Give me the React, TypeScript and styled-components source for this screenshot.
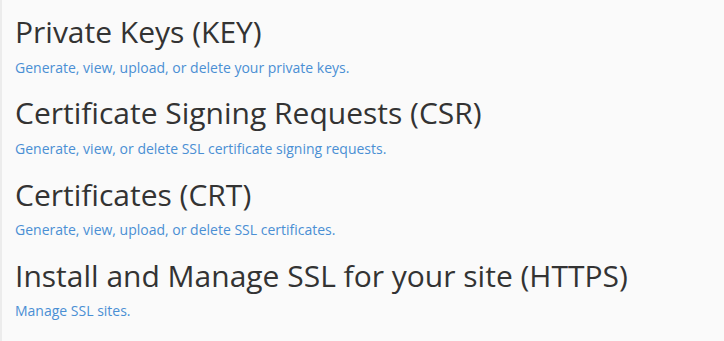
import React from "react";
import styled, { createGlobalStyle } from "styled-components";

const GlobalStyle = createGlobalStyle`
  html, body {
    margin: 0;
    padding: 0;
    background: #fafafa;
  }
`;

const Page = styled.main`
  font-family: "Open Sans", "Liberation Sans", Arial, sans-serif;
  min-height: 341px;
  box-sizing: border-box;
  border-left: 2px solid #ececec;
  padding: 12px 13px 0;
  background: #fafafa;
`;

const Section = styled.section`
  display: flex;
  flex-direction: column;
  align-items: flex-start;
  height: 81.3px;
`;

const Heading = styled.h2`
  margin: 0;
  font-size: 30px;
  font-weight: 400;
  line-height: 40px;
  color: #333333;
`;

const Description = styled.a`
  margin-top: 5.6px;
  font-size: 14px;
  line-height: 20px;
  color: #4a8fd4;
  text-decoration: none;
  cursor: pointer;
`;

const tools = [
  {
    title: "Private Keys (KEY)",
    text: "Generate, view, upload, or delete your private keys.",
  },
  {
    title: "Certificate Signing Requests (CSR)",
    text: "Generate, view, or delete SSL certificate signing requests.",
  },
  {
    title: "Certificates (CRT)",
    text: "Generate, view, upload, or delete SSL certificates.",
  },
  {
    title: "Install and Manage SSL for your site (HTTPS)",
    text: "Manage SSL sites.",
  },
];

export default function App() {
  return (
    <>
      <GlobalStyle />
      <Page>
        {tools.map((tool) => (
          <Section key={tool.title}>
            <Heading>{tool.title}</Heading>
            <Description>{tool.text}</Description>
          </Section>
        ))}
      </Page>
    </>
  );
}
